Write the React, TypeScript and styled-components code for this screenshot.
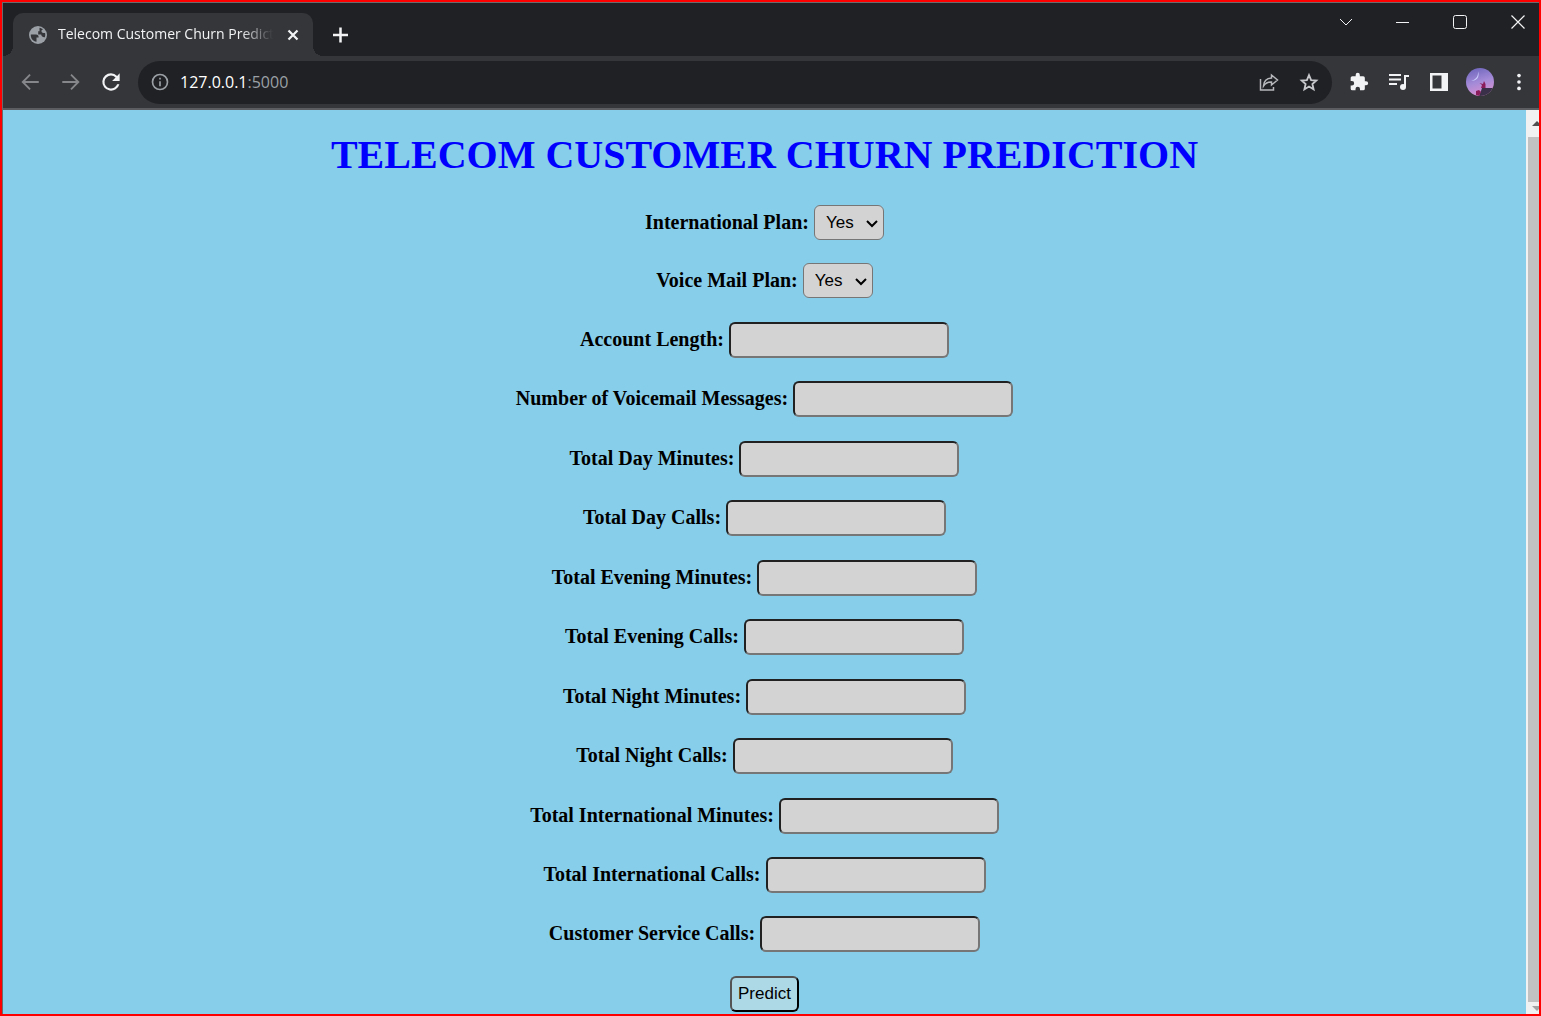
import React from 'react';
import styled, { createGlobalStyle } from 'styled-components';

const Global = createGlobalStyle`
  * { box-sizing: border-box; }
  body { margin: 0; }
`;

const Frame = styled.div`
  display: flex;
  flex-direction: column;
  height: 100vh;
  min-height: 640px;
  overflow: hidden;
  border: 2px solid #ff0000;
  background: #35363a;
`;

const Browser = styled.div`
  flex: 1;
  min-height: 0;
  display: flex;
  flex-direction: column;
  border-top: 1px solid #6a6b6d;
  border-left: 1px solid #6a6b6d;
`;

const TabStrip = styled.header`
  display: flex;
  align-items: flex-end;
  height: 53px;
  padding-left: 10px;
  background: #202124;
`;

const Tab = styled.div`
  position: relative;
  display: flex;
  align-items: center;
  width: 300px;
  height: 43px;
  padding: 0 10px 0 15px;
  border-radius: 10px 10px 0 0;
  background: #35363a;
  &::before, &::after {
    content: '';
    position: absolute;
    bottom: 0;
    width: 10px;
    height: 10px;
  }
  &::before {
    left: -10px;
    background: radial-gradient(circle at 0 0, #202124 10px, #35363a 10px);
  }
  &::after {
    right: -10px;
    background: radial-gradient(circle at 100% 0, #202124 10px, #35363a 10px);
  }
`;

const TabTitle = styled.span`
  flex: 1;
  margin: 0 10px;
  padding-bottom: 2px;
  overflow: hidden;
  white-space: nowrap;
  font: 14px/20px 'Open Sans', 'Noto Sans', sans-serif;
  color: #f1f3f4;
  mask-image: linear-gradient(to right, #000 85%, transparent 100%);
`;

const IconButton = styled.button<{ $w?: number; $h?: number; $color?: string }>`
  display: flex;
  flex: none;
  align-items: center;
  justify-content: center;
  width: ${p => p.$w ?? 40}px;
  height: ${p => p.$h ?? 40}px;
  padding: 0;
  border: 0;
  background: none;
  color: ${p => p.$color ?? '#f1f3f4'};
`;

const WindowControls = styled.div`
  display: flex;
  align-self: flex-start;
  margin-left: auto;
  margin-right: -8px;
`;

const Toolbar = styled.nav`
  display: flex;
  align-items: center;
  height: 54px;
  padding: 0 2px 0 8px;
  border-bottom: 2px solid #5c5d60;
  background: #35363a;
`;

const AddressBar = styled.div`
  flex: 1;
  display: flex;
  align-items: center;
  height: 43px;
  margin: 0 7px;
  padding: 0 3px 0 2px;
  border-radius: 22px;
  background: #202124;
`;

const Address = styled.a`
  flex: 1;
  font: 16px/24px 'Open Sans', 'Noto Sans', sans-serif;
  text-decoration: none;
  color: #9aa0a6;
`;

const Host = styled.span`
  color: #ffffff;
`;

const Viewport = styled.div`
  flex: 1;
  min-height: 0;
  display: flex;
`;

const Page = styled.main`
  flex: 1;
  display: flex;
  flex-direction: column;
  align-items: center;
  padding: 22px 8px 2px;
  background: #87ceeb;
`;

const Title = styled.h1`
  margin: 0 0 27px;
  font: bold 40px/46px 'Liberation Serif', serif;
  color: #0000ff;
`;

const Form = styled.form`
  flex: 1;
  display: flex;
  flex-direction: column;
  align-items: center;
  justify-content: space-between;
`;

const Field = styled.div`
  display: flex;
  align-items: center;
  gap: 5px;
`;

const Label = styled.label`
  padding-bottom: 2px;
  font: bold 20px/22px 'Liberation Serif', serif;
  color: #000000;
`;

const chevron =
  "url(\"data:image/svg+xml,%3Csvg xmlns='http://www.w3.org/2000/svg' width='12' height='8' fill='none' stroke='black' stroke-width='2'%3E%3Cpath d='M1 1l5 5 5-5'/%3E%3C/svg%3E\")";

const Select = styled.select`
  appearance: none;
  width: 70px;
  height: 35px;
  padding: 0 11px;
  border: 1px solid #767676;
  border-radius: 6px;
  background: #d3d3d3 ${chevron} no-repeat right 5px top 14px;
  font: 17px 'Liberation Sans', sans-serif;
  color: #000000;
`;

const Input = styled.input`
  width: 220px;
  height: 36px;
  padding: 6px;
  border: 2px inset #767676;
  border-radius: 6px;
  background: #d3d3d3;
  font: 17px 'Liberation Sans', sans-serif;
`;

const Predict = styled.button`
  width: 69px;
  height: 36px;
  padding: 0;
  border: 2px outset #000000;
  border-radius: 6px;
  background: #add8e6;
  font: 17px 'Liberation Sans', sans-serif;
  color: #000000;
`;

const Scrollbar = styled.div`
  display: flex;
  flex-direction: column;
  width: 13px;
  padding-left: 2px;
  overflow: hidden;
  background: #f1f1f1;
`;

const Thumb = styled.div`
  flex: 1;
  background: #c1c1c1;
`;

const ArrowBox = styled.div<{ $h: number }>`
  display: flex;
  flex: none;
  align-items: center;
  height: ${p => p.$h}px;
  padding-left: 4px;
`;

const measures = [
  'Account Length',
  'Number of Voicemail Messages',
  'Total Day Minutes',
  'Total Day Calls',
  'Total Evening Minutes',
  'Total Evening Calls',
  'Total Night Minutes',
  'Total Night Calls',
  'Total International Minutes',
  'Total International Calls',
  'Customer Service Calls',
];

const plans = ['International Plan', 'Voice Mail Plan'];

const toId = (name: string) => name.toLowerCase().replace(/ /g, '-');

type IconProps = { size?: number; children: React.ReactNode; w?: number };

const Line = ({ size = 24, w = 2, children }: IconProps) => (
  <svg width={size} height={size} viewBox="0 0 24 24" fill="none" stroke="currentColor" strokeWidth={w} aria-hidden="true">
    {children}
  </svg>
);

const Solid = ({ size = 24, children }: IconProps) => (
  <svg width={size} height={size} viewBox="0 0 24 24" fill="currentColor" aria-hidden="true">
    {children}
  </svg>
);

const Globe = () => (
  <svg width="20" height="20" viewBox="0 0 20 20" aria-hidden="true">
    <circle cx="10" cy="10" r="9" fill="#9aa0a6" />
    <path d="M2.800 9.500h5.200c1.800 0 2.800 1.300 2.600 3h-2.100v4.200C5 16.300 2.600 13.500 2.800 9.500Z" fill="#35363a" />
    <path d="M11.500 2.800c1.500.3 2.500.8 3.500 1.700-1.200.3-1.700 1-1.500 2 .2 1.200 1.500 1.500 3.500 1.500.5 1.500.3 3-.2 4.200-1.800.3-3.300-.7-3.600-2.700h-3V6.300h1.300Z" fill="#35363a" />
  </svg>
);

const Avatar = () => (
  <svg width="28" height="28" viewBox="0 0 28 28" aria-hidden="true">
    <defs>
      <linearGradient id="sky" x1="0.3" y1="0" x2="0.6" y2="1">
        <stop offset="0" stopColor="#7067bd" />
        <stop offset="0.5" stopColor="#a48bd8" />
        <stop offset="1" stopColor="#dc91cf" />
      </linearGradient>
      <clipPath id="round"><circle cx="14" cy="14" r="14" /></clipPath>
    </defs>
    <g clipPath="url(#round)">
      <rect width="28" height="28" fill="url(#sky)" />
      <path d="M12 3.500c2 5-1 9.500-7 9.500 4.500-1 7.500-4.500 7-9.500Z" fill="#cdd0ff" />
      <path d="M13 28l2-5 1-3h12v8Z" fill="#3a3049" />
      <path d="M15 20l1-3-2.500-2 3.500 1 1-3 1.500 3v4ZM10 27v-4l3-1 2 2-2 4Z" fill="#8a1c5b" />
    </g>
  </svg>
);

export default function App() {
  return (
    <Frame>
      <Global />
      <Browser>
        <TabStrip>
          <Tab>
            <Globe />
            <TabTitle>Telecom Customer Churn Predict</TabTitle>
            <IconButton $w={20} $h={20} aria-label="Close tab">
              <Line size={18} w={3}><path d="M6 6l12 12M18 6L6 18" /></Line>
            </IconButton>
          </Tab>
          <IconButton $w={54} $h={43} aria-label="New tab">
            <Line size={24}><path d="M12.500 4.500v15M5 12h15" strokeWidth="2.500" /></Line>
          </IconButton>
          <WindowControls>
            <IconButton $w={56} $h={38} aria-label="Search tabs">
              <svg width="14" height="8" fill="none" stroke="currentColor" aria-hidden="true"><path d="M1 1l6 6 6-6" /></svg>
            </IconButton>
            <IconButton $w={57} $h={38} aria-label="Minimize">
              <svg width="13" height="3" fill="none" stroke="currentColor" aria-hidden="true"><path d="M0 1.500h13" /></svg>
            </IconButton>
            <IconButton $w={58} $h={38} aria-label="Maximize">
              <svg width="14" height="14" fill="none" stroke="currentColor" aria-hidden="true"><rect x="0.500" y="0.500" width="13" height="13" rx="2" /></svg>
            </IconButton>
            <IconButton $w={58} $h={38} aria-label="Close">
              <svg width="14" height="14" fill="none" stroke="currentColor" strokeWidth="1.200" aria-hidden="true"><path d="M.5.5l13 13M13.500.5l-13 13" /></svg>
            </IconButton>
          </WindowControls>
        </TabStrip>
        <Toolbar>
          <IconButton $color="#85878a" aria-label="Back">
            <Line size={22}><path d="M20.500 12H3.500M11 4L3 12l8 8" /></Line>
          </IconButton>
          <IconButton $color="#85878a" aria-label="Forward">
            <Line size={22}><path d="M2.500 12h17M12 4l8 8-8 8" /></Line>
          </IconButton>
          <IconButton aria-label="Reload">
            <Solid size={26}><path d="M17.650 6.350A7.960 7.960 0 0 0 12 4a8 8 0 1 0 7.730 10h-2.080A6 6 0 1 1 12 6c1.660 0 3.140.69 4.220 1.780L13 11h7V4Z" /></Solid>
          </IconButton>
          <AddressBar>
            <IconButton $color="#9aa0a6" aria-label="View site information">
              <Line size={20}><circle cx="12" cy="12" r="9" /><path d="M12 11v6M12 7v2" /></Line>
            </IconButton>
            <Address href="#"><Host>127.0.0.1</Host>:5000</Address>
            <IconButton $color="#b6b8bb" aria-label="Share">
              <svg width="20" height="20" viewBox="0 0 20 20" fill="none" stroke="currentColor" strokeWidth="1.500" aria-hidden="true">
                <path d="M1.500 7v11h13v-3M12.500 3l6 5-6 5v-3c-3.500-.2-6 1-8 4 .3-4.500 3-7.700 8-8Z" />
              </svg>
            </IconButton>
            <IconButton $color="#c6c8cb" aria-label="Bookmark this tab">
              <Line size={22}><path d="M12 4.500l2.300 5.400 5.700.5-4.300 3.800 1.300 5.700-5-3-5 3 1.300-5.700L4 10.400l5.700-.5Z" /></Line>
            </IconButton>
          </AddressBar>
          <IconButton aria-label="Extensions">
            <Solid size={20}><path d="M20.500 11H19V7a2 2 0 0 0-2-2h-4V3.500a2.500 2.500 0 0 0-5 0V5H4a2 2 0 0 0-2 2v3.800h1.500a2.700 2.700 0 0 1 0 5.400H2V20a2 2 0 0 0 2 2h3.800v-1.500a2.700 2.700 0 0 1 5.400 0V22H17a2 2 0 0 0 2-2v-4h1.500a2.500 2.500 0 0 0 0-5Z" /></Solid>
          </IconButton>
          <IconButton aria-label="Media controls">
            <svg width="20" height="18" viewBox="0 0 20 18" fill="none" stroke="currentColor" strokeWidth="2" aria-hidden="true">
              <path d="M0 2h12M0 6.500h12M0 11h8M16 14V3h4" />
              <circle cx="14" cy="14" r="3" fill="currentColor" stroke="none" />
            </svg>
          </IconButton>
          <IconButton aria-label="Side panel">
            <svg width="18" height="18" fill="currentColor" fillRule="evenodd" aria-hidden="true"><path d="M0 0h18v18H0ZM2.500 2.500v13h9v-13Z" /></svg>
          </IconButton>
          <IconButton $w={42} aria-label="Profile"><Avatar /></IconButton>
          <IconButton $w={36} aria-label="Menu">
            <Solid size={22}><circle cx="12" cy="5" r="2" /><circle cx="12" cy="12" r="2" /><circle cx="12" cy="19" r="2" /></Solid>
          </IconButton>
        </Toolbar>
        <Viewport>
          <Page>
            <Title>TELECOM CUSTOMER CHURN PREDICTION</Title>
            <Form onSubmit={e => e.preventDefault()}>
              {plans.map(name => (
                <Field key={name}>
                  <Label htmlFor={toId(name)}>{name}:</Label>
                  <Select id={toId(name)}>
                    <option>Yes</option>
                    <option>No</option>
                  </Select>
                </Field>
              ))}
              {measures.map(name => (
                <Field key={name}>
                  <Label htmlFor={toId(name)}>{name}:</Label>
                  <Input id={toId(name)} type="text" />
                </Field>
              ))}
              <Predict type="submit">Predict</Predict>
            </Form>
          </Page>
          <Scrollbar aria-hidden="true">
            <ArrowBox $h={27}>
              <svg width="10" height="5" fill="#505050"><path d="M0 5L5 0l5 5Z" /></svg>
            </ArrowBox>
            <Thumb />
            <ArrowBox $h={12}>
              <svg width="10" height="5" fill="#a3a3a3"><path d="M0 0h10L5 5Z" /></svg>
            </ArrowBox>
          </Scrollbar>
        </Viewport>
      </Browser>
    </Frame>
  );
}
